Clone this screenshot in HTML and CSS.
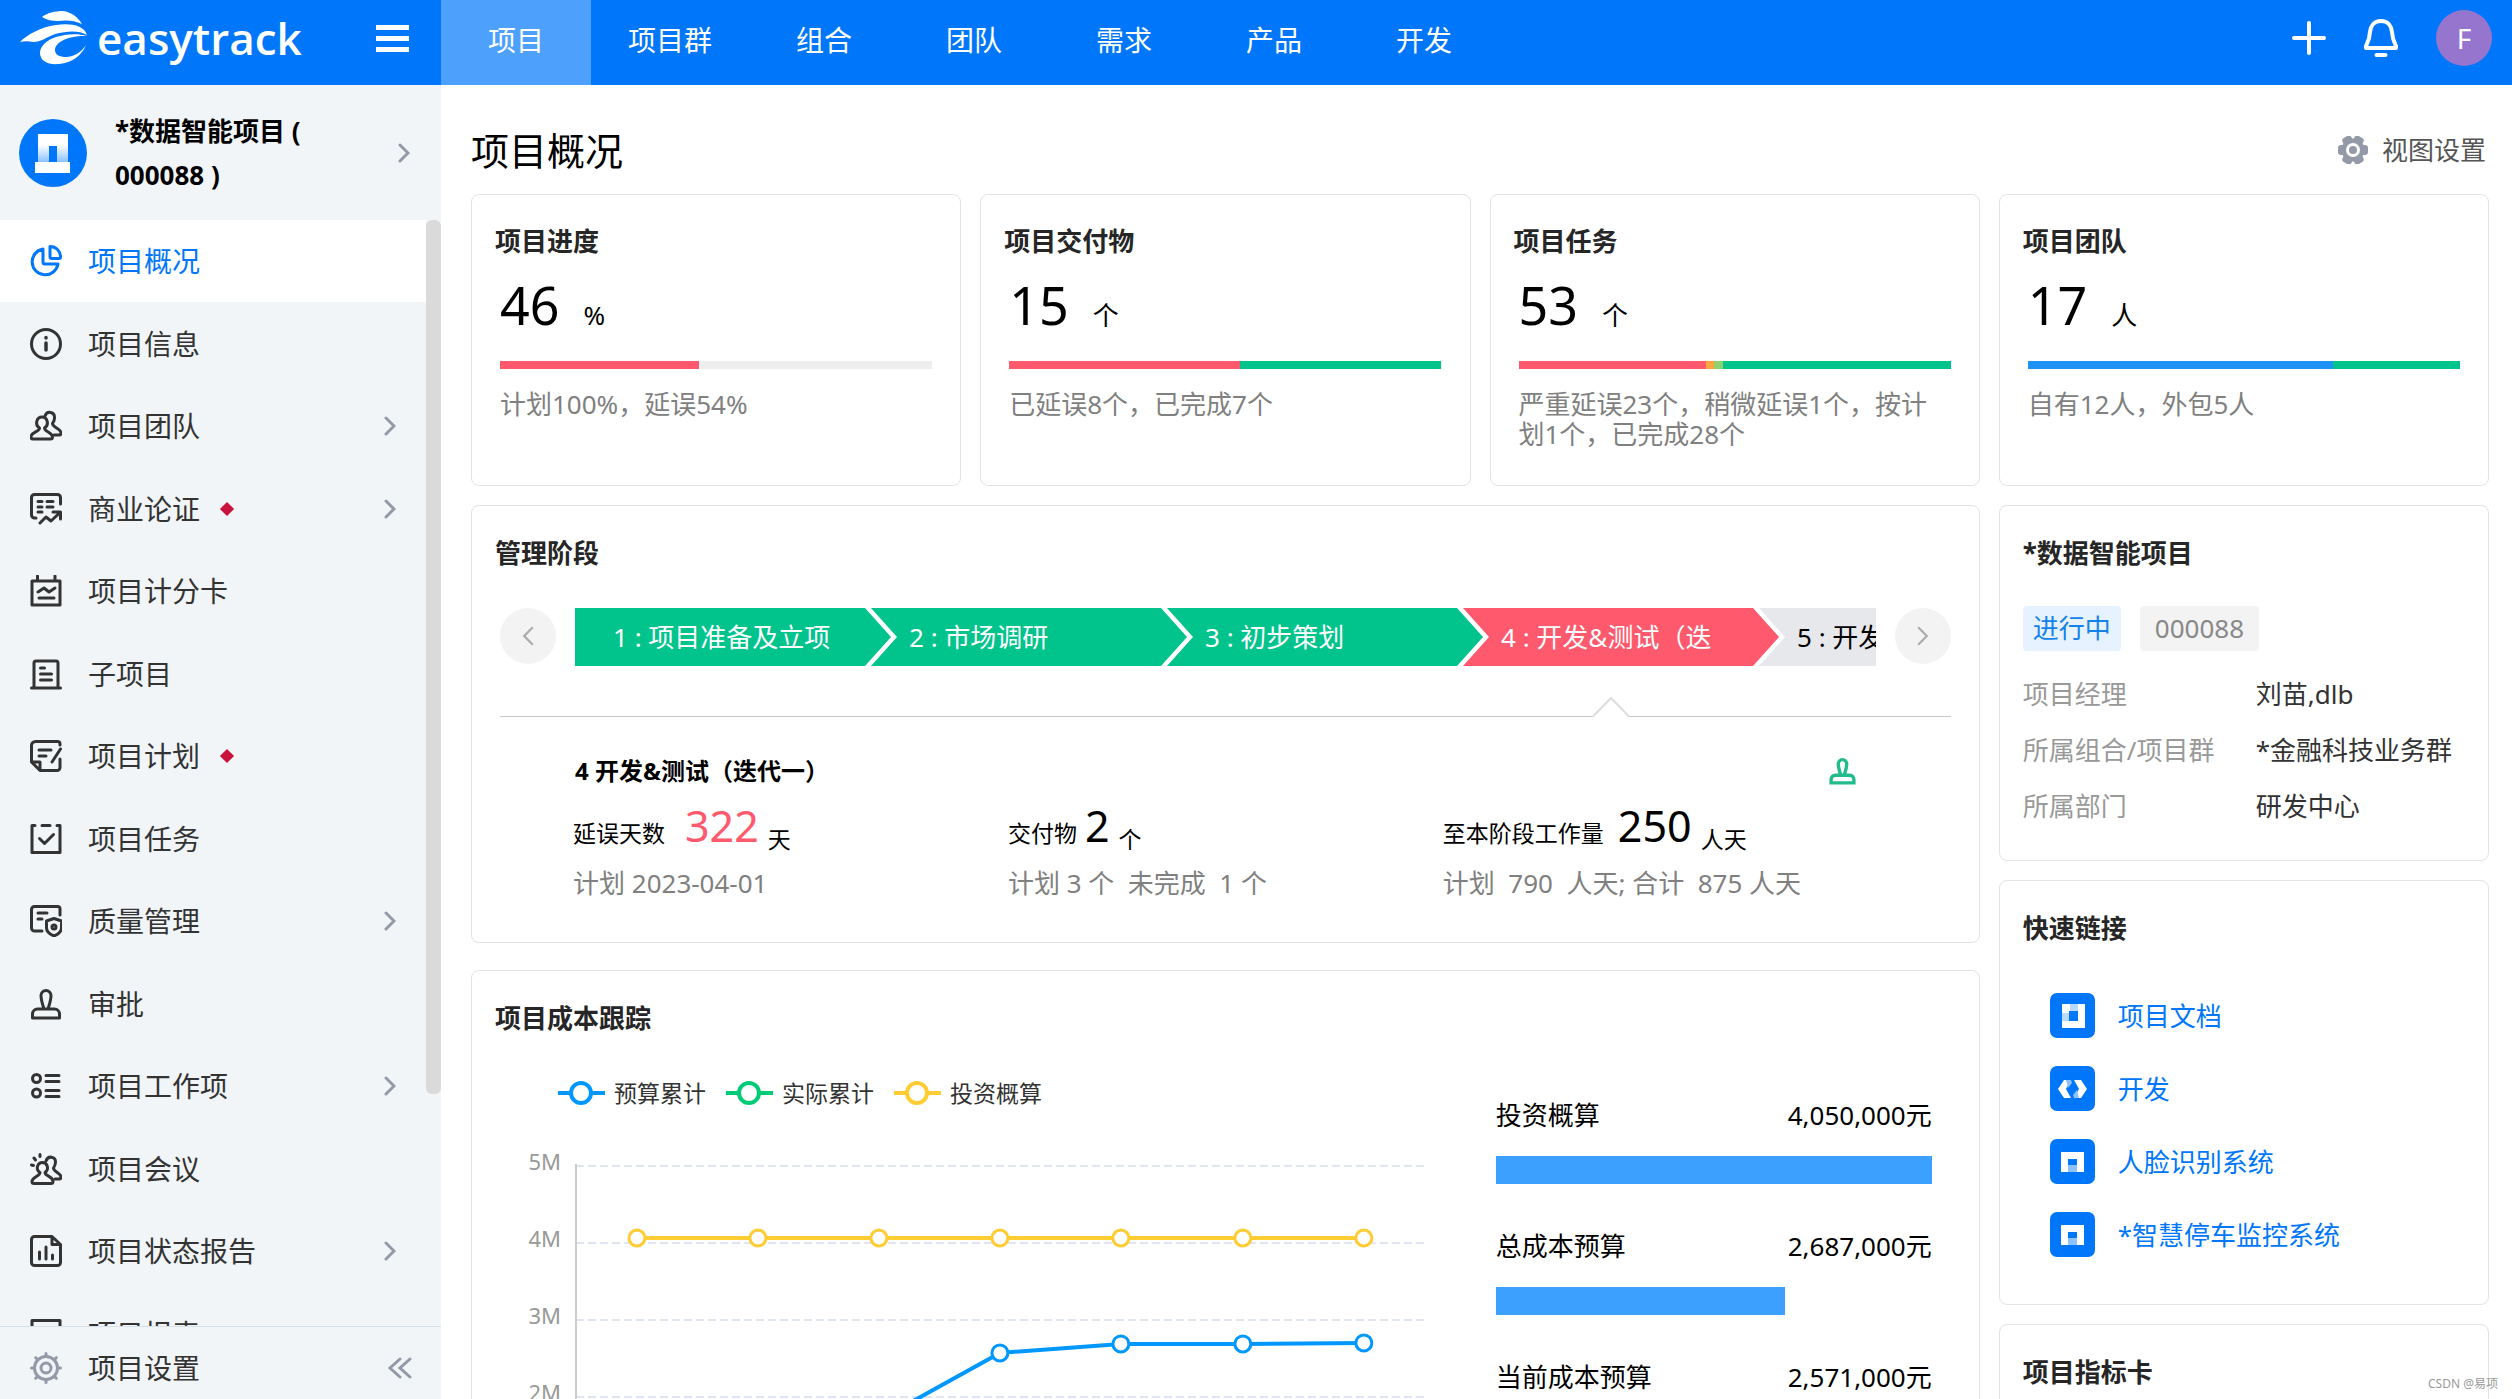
FILE: index.html
```html
<!DOCTYPE html>
<html lang="zh-CN">
<head>
<meta charset="utf-8">
<title>项目概况 - easytrack</title>
<link rel="stylesheet" href="styles.css">
</head>
<body>
<svg class="sprite" aria-hidden="true">
  <symbol id="i-right" viewBox="0 0 12 20"><path d="M2 2l8 8-8 8"/></symbol>
  <symbol id="i-left" viewBox="0 0 12 20"><path d="M10 2l-8 8 8 8"/></symbol>
  <symbol id="i-stamp" viewBox="0 0 32 32"><path d="M14 21C12 15 11 11 11 7.500a5 5 0 0 1 10 0C21 11 20 15 18 21M2.500 30v-4a5 5 0 0 1 5-5h17a5 5 0 0 1 5 5v4z"/></symbol>
  <symbol id="i-people" viewBox="0 0 32 32"><path d="M9.500 18c-5-3-3-11 2.500-11s7.500 8 2.500 11c0 4 8 4 8 9 0 1.500-.5 2-2 2H3c-1.500 0-2-.5-2-2 0-5 8.500-5 8.500-9z"/><path d="M15 6c2-6 10-4 9.500 2 0 3-1 4-2 5.500 0 4 8.500 5 8.500 9.500 0 1.500-.5 2-2 2h-5"/></symbol>
  <symbol id="i-card" viewBox="0 0 45 45"><rect width="45" height="45" rx="7" fill="#0077fa"/><path d="M11 13h23v20h-7V20h-9v13h-7z" fill="#fff"/><path d="M18 26h9v7h-9z" fill="#8cc2ff"/></symbol>
</svg>

<header class="topbar">
  <div class="brand">
    <svg class="brand-mark" viewBox="0 0 67 54" aria-hidden="true"><path d="M22 6C27 2 35 0 43 0c8 1 15 6 19 13C54 9 46 9 38 10 32 10 27 9 22 6z"/><path d="M0 31C7 24 20 16 36 14c14-2 28 0 31 10-8-5-20-4-32-1-8 3-14 8-22 8-4-1-9-1-13 0z"/><path d="M67 25C58 22 45 23 36 26c-9 3-16 9-16 16 0 8 8 12 19 11 13-1 23-9 27-19-5 8-13 12-20 12-6 0-11-2-11-7 0-8 14-15 32-14z"/></svg>
    <span class="brand-name">easytrack</span>
    <button class="burger" type="button" aria-label="菜单"><i></i><i></i><i></i></button>
  </div>
  <nav class="tabs">
    <a class="tab active" href="#">项目</a>
    <a class="tab" href="#">项目群</a>
    <a class="tab" href="#">组合</a>
    <a class="tab" href="#">团队</a>
    <a class="tab" href="#">需求</a>
    <a class="tab" href="#">产品</a>
    <a class="tab" href="#">开发</a>
  </nav>
  <div class="tools">
    <button type="button" aria-label="新建"><svg width="34" height="34" viewBox="0 0 34 34"><path d="M17 2v30M2 17h30"/></svg></button>
    <button type="button" aria-label="通知"><svg width="34" height="38" viewBox="0 0 34 38"><path d="M17 2c-7 0-10.500 5-11 11-.5 8-2.500 11-4 14v2h30v-2c-1.500-3-3.500-6-4-14C27.500 7 24 2 17 2zM12.500 36h9"/></svg></button>
    <button class="avatar" type="button">F</button>
  </div>
</header>

<div class="layout">
  <aside class="sidebar">
    <a class="project" href="#">
      <svg width="68" height="68" viewBox="0 0 68 68" aria-hidden="true"><defs><linearGradient id="fade" x1="0" y1="0" x2="0" y2="1"><stop offset="0" stop-color="#fff"/><stop offset="1" stop-color="#8cc2ff"/></linearGradient></defs><circle cx="34" cy="34" r="34" fill="#0077fa"/><path d="M19 15h30v12H19z" fill="#fff"/><path d="M19 26h11v17H19zM38 26h11v17H38z" fill="url(#fade)"/><path d="M16 43h35v11H16z" fill="#fff"/></svg>
      <span class="project-name">*数据智能项目 (<br>000088 )</span>
      <svg class="chev" width="13" height="22"><use href="#i-right"/></svg>
    </a>
    <div class="menu-wrap">
      <nav class="menu">
        <a class="item active" href="#"><svg class="ico" viewBox="0 0 32 32"><path d="M13 4A13 13 0 1 0 28 19H15a2 2 0 0 1-2-2z"/><path d="M20 1.500c6 0 10.500 4.500 10.500 10.500 0 1-.5 1.500-1.500 1.500h-7c-1.500 0-2-.5-2-2z"/></svg><span>项目概况</span></a>
        <a class="item" href="#"><svg class="ico" viewBox="0 0 32 32"><circle cx="16" cy="16" r="14.500"/><path d="M16 15v7M16 9.500v.5" stroke-width="3.500"/></svg><span>项目信息</span></a>
        <a class="item" href="#"><svg class="ico"><use href="#i-people"/></svg><span>项目团队</span><svg class="chev"><use href="#i-right"/></svg></a>
        <a class="item" href="#"><svg class="ico" viewBox="0 0 32 32"><path d="M6 25H4.500a3 3 0 0 1-3-3V4.500a3 3 0 0 1 3-3h23a3 3 0 0 1 3 3V11M8 8.500h4M17 8.500h6M8 14h4M17 14h6M8 19h4M10 30l6-6 5 4 9-8.500M23 19h7.500v7"/></svg><span>商业论证</span><i class="mark"></i><svg class="chev"><use href="#i-right"/></svg></a>
        <a class="item" href="#"><svg class="ico" viewBox="0 0 32 32"><path d="M2 6h28v24H2zM7.500 1v5M25 1v5M8 17l6-4 5 4 6-4M9 23h15"/></svg><span>项目计分卡</span></a>
        <a class="item" href="#"><svg class="ico" viewBox="0 0 32 32"><path d="M1.500 30h29M4 30V5a2 2 0 0 1 2-2h20a2 2 0 0 1 2 2v25M10.500 10h4M10.500 16h11M10.500 22h11"/></svg><span>子项目</span></a>
        <a class="item" href="#"><svg class="ico" viewBox="0 0 32 32"><path d="M30 5V4a2.500 2.500 0 0 0-2.500-2.500h-22a4 4 0 0 0-4 4V22l8.500 8.500h17a3 3 0 0 0 3-3V19M1.500 22H10v8M9 10h12M9 16h7M22 22l8.500-13"/></svg><span>项目计划</span><i class="mark"></i></a>
        <a class="item" href="#"><svg class="ico" viewBox="0 0 32 32"><path d="M5 2.500H2v27h28v-27h-3M12 2.500h8M9.500 15.500l5 5 9-9"/></svg><span>项目任务</span></a>
        <a class="item" href="#"><svg class="ico" viewBox="0 0 32 32"><path d="M12 26H4.500a3 3 0 0 1-3-3V4.500a3 3 0 0 1 3-3h23a2.500 2.500 0 0 1 2.500 2.500v6M8 8h9M8 14h4M24 13.500l7.500 2.500v7c0 4-4 6.500-7.500 8-3.500-1.500-7.500-4-7.500-8v-7z"/><circle cx="24" cy="22" r="2"/></svg><span>质量管理</span><svg class="chev"><use href="#i-right"/></svg></a>
        <a class="item" href="#"><svg class="ico"><use href="#i-stamp"/></svg><span>审批</span></a>
        <a class="item" href="#"><svg class="ico" viewBox="0 0 32 32"><circle cx="6.500" cy="8.500" r="4"/><circle cx="6.500" cy="23" r="4"/><path d="M16 5.500h13M16 11.500h13M16 20.500h13M16 26.500h13"/></svg><span>项目工作项</span><svg class="chev"><use href="#i-right"/></svg></a>
        <a class="item" href="#"><svg class="ico" viewBox="0 0 32 32"><path d="M10 19.500c-5-3-2.500-10 2.500-10s7 7 2.500 10c0 4 8 3.500 8 9 0 1.500-.5 2-2 2H4c-1.500 0-2-.5-2-2 0-5 8-5 8-9z"/><path d="M16 8c2-6 9.500-4.500 9.500 1 0 3-1 4.500-2 6 0 4 7.500 5 7.500 9 0 1.500-.5 2-2 2h-4M1.500 12l2 .5M4 5l1.500 2M10 1.500v2"/></svg><span>项目会议</span></a>
        <a class="item" href="#"><svg class="ico" viewBox="0 0 32 32"><path d="M22 1.500H4.500a3 3 0 0 0-3 3v23a3 3 0 0 0 3 3h23a3 3 0 0 0 3-3V9.500zM22 1.500v8h8.500M9.500 17v7M16 12v12M22.500 20v4"/></svg><span>项目状态报告</span><svg class="chev"><use href="#i-right"/></svg></a>
        <a class="item" href="#"><svg class="ico" viewBox="0 0 32 32"><path d="M2 2.500h28v27H2z"/></svg><span>项目报表</span></a>
      </nav>
      <div class="scroll"><div class="thumb"></div></div>
    </div>
    <div class="side-foot">
      <svg class="ico" viewBox="0 0 32 32"><circle cx="16" cy="16" r="11.500"/><circle cx="16" cy="16" r="5"/><path d="M16 1.500v3M16 27.500v3M1.500 16h3M27.500 16h3M5.700 5.700l2 2M24.300 24.300l2 2M26.300 5.700l-2 2M7.700 24.300l-2 2"/></svg>
      <a href="#">项目设置</a>
      <button type="button" aria-label="收起"><svg width="24" height="22" viewBox="0 0 24 22"><path d="M12 2l-10 9 10 9M22 2l-10 9 10 9"/></svg></button>
    </div>
  </aside>

  <main class="main">
    <div class="page-head">
      <h1>项目概况</h1>
      <button class="view-set" type="button"><svg width="30" height="28" viewBox="-15 -14 30 28"><circle r="11.500"/><rect x="-15" y="-5" width="30" height="10" rx="3"/><rect x="-15" y="-5" width="30" height="10" rx="3" transform="rotate(60)"/><rect x="-15" y="-5" width="30" height="10" rx="3" transform="rotate(120)"/><circle r="7" fill="#fff"/><circle r="4"/></svg>视图设置</button>
    </div>

    <div class="board">
      <section class="card">
        <h2>项目进度</h2>
        <div class="stat"><b>46</b><span>%</span></div>
        <div class="bar"><i class="red" style="width:46%"></i></div>
        <p class="note">计划100%，延误54%</p>
      </section>
      <section class="card">
        <h2>项目交付物</h2>
        <div class="stat"><b>15</b><span>个</span></div>
        <div class="bar"><i class="red" style="width:53.3%"></i><i class="green" style="width:46.7%"></i></div>
        <p class="note">已延误8个，已完成7个</p>
      </section>
      <section class="card">
        <h2>项目任务</h2>
        <div class="stat"><b>53</b><span>个</span></div>
        <div class="bar"><i class="red" style="width:43.3%"></i><i class="orange" style="width:2%"></i><i class="lime" style="width:2%"></i><i class="green" style="width:52.7%"></i></div>
        <p class="note">严重延误23个，稍微延误1个，按计划1个，已完成28个</p>
      </section>
      <section class="card">
        <h2>项目团队</h2>
        <div class="stat"><b>17</b><span>人</span></div>
        <div class="bar"><i class="blue" style="width:70.6%"></i><i class="green" style="width:29.4%"></i></div>
        <p class="note">自有12人，外包5人</p>
      </section>

      <div class="col-main">
        <section class="card">
          <h2>管理阶段</h2>
          <div class="body">
            <div class="phases">
              <button class="round" type="button" aria-label="上一阶段"><svg width="13" height="22"><use href="#i-left"/></svg></button>
              <div class="steps">
                <div class="step first">1 : 项目准备及立项</div>
                <div class="step">2 : 市场调研</div>
                <div class="step">3 : 初步策划</div>
                <div class="step late">4 : 开发&amp;测试（迭</div>
                <div class="step todo">5 : 开发</div>
              </div>
              <button class="round" type="button" aria-label="下一阶段"><svg width="13" height="22"><use href="#i-right"/></svg></button>
            </div>
            <div class="divider"><i class="before"></i><svg width="36" height="20" viewBox="0 0 36 20"><path d="M0 19.500L18 1l18 18.500"/></svg><i class="after"></i></div>
            <div class="detail">
              <div class="detail-head"><h3>4 开发&amp;测试（迭代一）</h3><svg width="27" height="28"><use href="#i-stamp"/></svg></div>
              <div class="metrics">
                <div><p class="m-top">延误天数<b class="wide late-num">322</b><sub>天</sub></p><p class="m-sub">计划 2023-04-01</p></div>
                <div><p class="m-top">交付物<b class="tight">2</b><sub>个</sub></p><p class="m-sub">计划 3 个  未完成  1 个</p></div>
                <div><p class="m-top">至本阶段工作量<b>250</b><sub>人天</sub></p><p class="m-sub">计划  790  人天; 合计  875 人天</p></div>
              </div>
            </div>
          </div>
        </section>

        <section class="card cost">
          <h2>项目成本跟踪</h2>
          <div class="body cost-body">
            <div>
              <div class="legend">
                <span><svg class="c-blue" width="47" height="26"><path d="M0 13h47"/><circle cx="23" cy="13" r="10"/></svg>预算累计</span>
                <span><svg class="c-green" width="47" height="26"><path d="M0 13h47"/><circle cx="23" cy="13" r="10"/></svg>实际累计</span>
                <span><svg class="c-yellow" width="47" height="26"><path d="M0 13h47"/><circle cx="23" cy="13" r="10"/></svg>投资概算</span>
              </div>
              <svg class="chart" viewBox="0 0 925 420" role="img" aria-label="项目成本跟踪">
                <g class="grid"><path d="M76 17h849M76 94h849M76 171h849M76 248h849M76 325h849"/></g>
                <path class="axis" d="M76 15v390"/>
                <g class="ticks"><text x="61" y="21">5M</text><text x="61" y="98">4M</text><text x="61" y="175">3M</text><text x="61" y="252">2M</text><text x="61" y="329">1M</text></g>
                <g class="line c-blue"><path d="M137 402L258 350L379 271L500 204L621 195L743 195L864 194"/><circle cx="379" cy="271" r="8"/><circle cx="500" cy="204" r="8"/><circle cx="621" cy="195" r="8"/><circle cx="743" cy="195" r="8"/><circle cx="864" cy="194" r="8"/></g>
                <g class="line c-yellow"><path d="M137 89H864"/><circle cx="137" cy="89" r="8"/><circle cx="258" cy="89" r="8"/><circle cx="379" cy="89" r="8"/><circle cx="500" cy="89" r="8"/><circle cx="621" cy="89" r="8"/><circle cx="743" cy="89" r="8"/><circle cx="864" cy="89" r="8"/></g>
              </svg>
            </div>
            <div class="budget">
              <div><p><span>投资概算</span><span>4,050,000元</span></p><i style="width:100%"></i></div>
              <div><p><span>总成本预算</span><span>2,687,000元</span></p><i style="width:66.3%"></i></div>
              <div><p><span>当前成本预算</span><span>2,571,000元</span></p><i style="width:63.5%"></i></div>
            </div>
          </div>
        </section>
      </div>

      <div class="col-side">
        <section class="card info">
          <h2>*数据智能项目</h2>
          <div class="tags"><span class="tag on">进行中</span><span class="tag">000088</span></div>
          <dl>
            <dt>项目经理</dt><dd>刘苗,dlb</dd>
            <dt>所属组合/项目群</dt><dd>*金融科技业务群</dd>
            <dt>所属部门</dt><dd>研发中心</dd>
          </dl>
        </section>
        <section class="card links">
          <h2>快速链接</h2>
          <a href="#"><svg viewBox="0 0 45 45"><rect width="45" height="45" rx="7" fill="#0077fa"/><path d="M12 11h23v24H12z" fill="#fff"/><path d="M12 20h7v8h-7zM20 11h8v7h-8z" fill="#b9daff"/><path d="M19 18h9v10h-9z" fill="#0077fa"/></svg>项目文档</a>
          <a href="#"><svg viewBox="0 0 45 45"><rect width="45" height="45" rx="7" fill="#0077fa"/><path d="M14 14h7l-5 9 5 9h-7l-6-9z" fill="#fff"/><path d="M31 14h-7l5 9-5 9h7l6-9z" fill="#fff"/><path d="M16 14h5l1 3-4 5zM29 32h-5l-1-3 4-5z" fill="#8cc2ff"/></svg>开发</a>
          <a href="#"><svg><use href="#i-card"/></svg>人脸识别系统</a>
          <a href="#"><svg><use href="#i-card"/></svg>*智慧停车监控系统</a>
        </section>
        <section class="card kpi">
          <h2>项目指标卡</h2>
        </section>
      </div>
    </div>
  </main>
</div>
<div class="watermark">CSDN @易项</div>
</body>
</html>
```

FILE: styles.css
```css
* { box-sizing: border-box; }
body {
  margin: 0;
  height: 100vh;
  overflow: hidden;
  display: flex;
  flex-direction: column;
  font-family: "Noto Sans", "Noto Sans CJK SC", sans-serif;
  font-size: 26px;
  line-height: 30px;
  color: #000;
  background: #fff;
}
h1, h2, h3, p, dl, dd { margin: 0; }
a { color: inherit; text-decoration: none; }
button { border: 0; padding: 0; background: none; font: inherit; color: inherit; cursor: pointer; }
svg { display: block; flex: none; fill: none; stroke: none; }
.sprite { position: absolute; width: 0; height: 0; }

/* top bar */
.topbar { display: flex; flex: none; height: 85px; background: #0077fa; color: #fff; }
.brand { width: 441px; padding: 0 32px 9px 20px; display: flex; align-items: center; }
.brand-mark { width: 67px; height: 54px; fill: #fff; }
.brand-name { margin-left: 10px; font: 600 44px/56px "Open Sans", sans-serif; }
.burger { margin-left: auto; width: 33px; display: grid; gap: 6px; }
.burger i { height: 5px; background: #fff; }
.tabs { display: flex; font-size: 28px; }
.tab { min-width: 150px; padding: 0 37px 5px; display: flex; align-items: center; justify-content: center; }
.tab.active { background: #4da0fc; }
.tools { margin-left: auto; padding: 0 20px 9px 0; display: flex; align-items: center; gap: 38px; }
.tools svg { stroke: #fff; stroke-width: 4; stroke-linecap: round; stroke-linejoin: round; }
.avatar { width: 56px; height: 56px; border-radius: 50%; background: #9575cd; font-size: 28px; }

/* side bar */
.layout { flex: 1; min-height: 0; display: flex; }
.sidebar { width: 441px; flex: none; display: flex; flex-direction: column; background: #f1f5f8; color: #333; }
.project { flex: none; height: 135px; padding: 0 31px 0 19px; display: flex; align-items: center; gap: 28px; }
.project-name { font-weight: 700; line-height: 44px; color: #000; }
.chev { margin-left: auto; width: 12px; height: 20px; stroke: #9499a8; stroke-width: 3; stroke-linecap: round; }
.menu-wrap { flex: 1; min-height: 0; display: flex; overflow: hidden; }
.menu { flex: 1; font-size: 28px; }
.item { height: 82px; padding: 0 30px; display: flex; align-items: center; }
.item:nth-child(even) { height: 83px; }
.item span { margin-left: 26px; }
.item.active { background: #fff; color: #0077fa; }
.ico { width: 32px; height: 32px; stroke: currentColor; stroke-width: 3; stroke-linecap: round; stroke-linejoin: round; }
.mark { width: 10px; height: 10px; margin-left: 22px; background: #c8133c; transform: rotate(45deg); }
.scroll { width: 15px; }
.thumb { height: 79%; border-radius: 6px; background: #dadada; }
.side-foot { flex: none; height: 73px; padding: 10px 29px 0 30px; display: flex; align-items: center; border-top: 1px solid #d5e0ea; font-size: 28px; }
.side-foot .ico { stroke: #9499a8; }
.side-foot a { margin-left: 26px; }
.side-foot button { margin-left: auto; }
.side-foot button svg { stroke: #9499a8; stroke-width: 3; stroke-linecap: round; }

/* page */
.main { flex: 1; min-width: 0; padding: 0 23px 0 30px; overflow: hidden; }
.page-head { height: 109px; padding-top: 25px; display: flex; justify-content: space-between; }
h1 { font-size: 38px; line-height: 80px; font-weight: 400; }
.view-set { height: 80px; display: flex; align-items: center; gap: 14px; padding-right: 3px; color: #555; }
.view-set svg { fill: #9499a8; }
.board { display: grid; grid-template-columns: repeat(4, minmax(0, 1fr)); gap: 19px; }
.card { border: 1px solid #e3e3e3; border-radius: 8px; background: #fff; padding: 31px 23px; min-width: 0; }
.board > .card { height: 292px; padding-top: 30px; }
h2 { font-size: 26px; line-height: 32px; font-weight: 700; color: #262626; }
.stat { margin: 15px 5px 0; height: 66px; display: flex; align-items: baseline; gap: 24px; line-height: 66px; }
.stat b { font-size: 52px; font-weight: 400; }
.bar { margin: 23px 5px 0; height: 8px; display: flex; background: #eee; }
.note { margin: 20px 5px 0; color: #808080; }
.red { background: #ff596e; }
.green { background: #00c48c; }
.orange { background: #ffa63d; }
.lime { background: #8fd16f; }
.blue { background: #1e93f5; }
.col-main { grid-column: span 3; display: grid; grid-template-columns: minmax(0, 1fr); gap: 27px; align-content: start; }
.col-side { display: grid; gap: 19px; align-content: start; }
.body { padding: 0 5px; }

/* phases */
.phases { margin-top: 39px; display: flex; gap: 19px; }
.round { flex: none; width: 56px; height: 56px; border-radius: 50%; background: #f3f3f3; display: grid; place-items: center; }
.round svg { stroke: #aaa; stroke-width: 2; }
.steps { flex: 1; min-width: 0; display: flex; overflow: hidden; }
.step {
  flex: none; width: 316px; height: 58px; margin-left: -20px; padding-left: 38px;
  line-height: 58px; color: #fff; background: #00c48c; white-space: nowrap;
  clip-path: polygon(0 0, 290px 0, 100% 50%, 290px 100%, 0 100%, 26px 50%);
}
.step.first { margin-left: 0; clip-path: polygon(0 0, 290px 0, 100% 50%, 290px 100%, 0 100%); }
.step.late { background: #ff596e; }
.step.todo { background: #e6e8ec; color: #000; }
.divider { margin-top: 31px; height: 20px; display: flex; align-items: flex-end; }
.divider i { height: 1px; background: #c8c8c8; }
.divider .before { flex: 1093; }
.divider .after { flex: 322; }
.divider svg { stroke: #ddd; stroke-width: 2; }
.detail { padding: 38px 73px 13px 73px; }
.detail-head { display: flex; align-items: center; justify-content: space-between; padding: 0 22px 0 2px; }
.detail-head svg { stroke: #22bb8a; stroke-width: 4; }
h3 { font-size: 24px; line-height: 32px; }
.metrics { display: grid; grid-template-columns: repeat(3, 1fr); white-space: pre; }
.m-top { height: 66px; font-size: 23px; line-height: 66px; padding-top: 13px; }
.m-top b { margin: 0 9px 0 14px; font-size: 43px; font-weight: 400; line-height: 50px; }
.m-top .wide { margin-left: 20px; }
.m-top .tight { margin-left: 8px; }
.m-top sub { font-size: 23px; line-height: 30px; }
.late-num { color: #ff596e; }
.m-sub { margin-top: 15px; color: #808080; }

/* cost */
.cost-body { display: grid; grid-template-columns: minmax(0, 925fr) minmax(0, 436fr); gap: 71px; padding-right: 24px; }
.legend { margin-top: 44px; padding-left: 58px; display: flex; gap: 20px; font-size: 23px; color: #333; }
.legend span { display: flex; align-items: center; gap: 9px; }
.legend path, .legend circle { stroke-width: 4; }
.c-blue { stroke: #0098ff; }
.c-green { stroke: #00cc76; }
.c-yellow { stroke: #ffcc33; }
.c-blue circle, .c-green circle, .c-yellow circle { fill: #fff; }
.chart { width: 100%; margin-top: 41px; }
.line { stroke-width: 4; }
.line circle { stroke-width: 3; }
.grid { stroke: #e0e6f1; stroke-width: 2; stroke-dasharray: 8 4; }
.axis { stroke: #ccc; stroke-width: 2; }
.ticks { font-size: 22px; fill: #999; text-anchor: end; }
.budget { padding-top: 66px; }
.budget > div { height: 131px; }
.budget p { display: flex; justify-content: space-between; }
.budget i { display: block; height: 28px; margin-top: 26px; background: #3ba0ff; }

/* right column */
.info { padding-bottom: 26px; }
.tags { margin-top: 37px; display: flex; gap: 19px; }
.tag { padding: 0 15px; border-radius: 4px; line-height: 45px; background: #f3f3f3; color: #888; }
.tag.on { padding: 0 10px; background: #e6f2ff; color: #1382ea; }
dl { margin-top: 15px; display: grid; grid-template-columns: 233px 1fr; line-height: 56px; }
dt { color: #999; }
dd { color: #333; white-space: nowrap; }
.links { padding-bottom: 33px; }
.links h2 { margin-bottom: 35px; }
.links a { height: 73px; padding-left: 27px; display: flex; align-items: center; gap: 23px; color: #0077fa; }
.links a svg { width: 45px; height: 45px; }
.kpi { height: 300px; }
.watermark { position: absolute; right: 14px; bottom: 6px; font-size: 12px; line-height: 18px; color: #999; }
```
